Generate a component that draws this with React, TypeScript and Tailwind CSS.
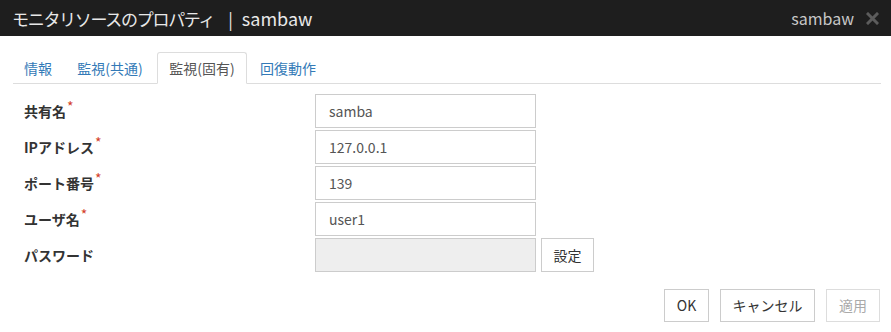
import { useState } from "react";

const font = { fontFamily: '"Noto Sans CJK JP", "Noto Sans", sans-serif' };

const tabs = [
  { label: "情報", w: "w-[50px]" },
  { label: "監視(共通)", w: "w-[90px]" },
  { label: "監視(固有)", w: "w-[90px]" },
  { label: "回復動作", w: "w-[78px]" },
];

const fields = [
  { label: "共有名", value: "samba", required: true },
  { label: "IPアドレス", value: "127.0.0.1", required: true },
  { label: "ポート番号", value: "139", required: true },
  { label: "ユーザ名", value: "user1", required: true },
];

export default function App() {
  const [active, setActive] = useState(2);

  return (
    <div className="w-[891px] h-[332px] bg-white overflow-hidden" style={font}>
      <div className="flex h-[36px] items-center justify-between bg-[#1e1e1e] pl-[12px] pr-[12px]">
        <h1 className="flex items-center leading-none text-[#e8e8e8]">
          <span className="text-[17px] tracking-[-1.3px]">モニタリソースのプロパティ</span>
          <span className="ml-[14px] mr-[9px] text-[17px]">|</span>
          <span className="text-[18px]">sambaw</span>
        </h1>
        <div className="flex items-center gap-[12px]">
          <span className="text-[16px] leading-none text-[#c8c8c8]">sambaw</span>
          <svg width="13" height="13" viewBox="0 0 13 13" className="mt-[1px]">
            <path
              d="M2 2 L11 11 M11 2 L2 11"
              stroke="#5c5c5c"
              strokeWidth="3"
              strokeLinecap="square"
            />
          </svg>
        </div>
      </div>

      <div className="px-[13px] pt-[16px]">
        <div className="mr-[-3px] flex gap-[2px] border-b border-[#dddddd]">
          {tabs.map((t, i) => (
            <button
              key={t.label}
              onClick={() => setActive(i)}
              className={
                i === active
                  ? `mb-[-1px] flex h-[32px] ${t.w} items-center justify-center rounded-t-[3px] border border-[#dddddd] border-b-white bg-white text-[14px] text-[#555555]`
                  : `mb-[-1px] flex h-[32px] ${t.w} items-center justify-center border border-transparent text-[14px] text-[#337ab7]`
              }
            >
              {t.label}
            </button>
          ))}
        </div>
      </div>

      <div className="px-[24px] pt-[10px]">
        <div className="flex flex-col gap-[2px]">
          {fields.map((f) => (
            <div key={f.label} className="flex h-[34px] items-center">
              <label className="w-[291px] text-[14px] font-bold text-[#333333]">
                {f.label}
                {f.required && (
                  <span className="relative top-[-5px] ml-[1px] text-[14px] leading-none font-normal text-[#d43f2a]">
                    *
                  </span>
                )}
              </label>
              <input
                readOnly
                value={f.value}
                className="h-[34px] w-[221px] border border-[#cccccc] px-[13px] text-[14px] text-[#555555] outline-none"
                style={font}
              />
            </div>
          ))}
          <div className="flex h-[34px] items-center">
            <label className="w-[291px] text-[14px] font-bold text-[#333333]">パスワード</label>
            <input
              disabled
              className="h-[34px] w-[221px] border border-[#cccccc] bg-[#eeeeee] px-[13px] text-[14px]"
            />
            <button className="ml-[5px] h-[34px] w-[53px] border border-[#cccccc] bg-white text-[14px] text-[#333333]">
              設定
            </button>
          </div>
        </div>
      </div>

      <div className="mt-[17px] flex justify-end gap-[11px] pr-[11px]">
        <button className="h-[33px] w-[45px] border border-[#cccccc] bg-white text-[14px] text-[#333333]">
          OK
        </button>
        <button className="h-[33px] w-[95px] border border-[#cccccc] bg-white text-[14px] text-[#333333]">
          キャンセル
        </button>
        <button
          disabled
          className="h-[33px] w-[54px] border border-[#dddddd] bg-white text-[14px] text-[#aaaaaa]"
        >
          適用
        </button>
      </div>
    </div>
  );
}
